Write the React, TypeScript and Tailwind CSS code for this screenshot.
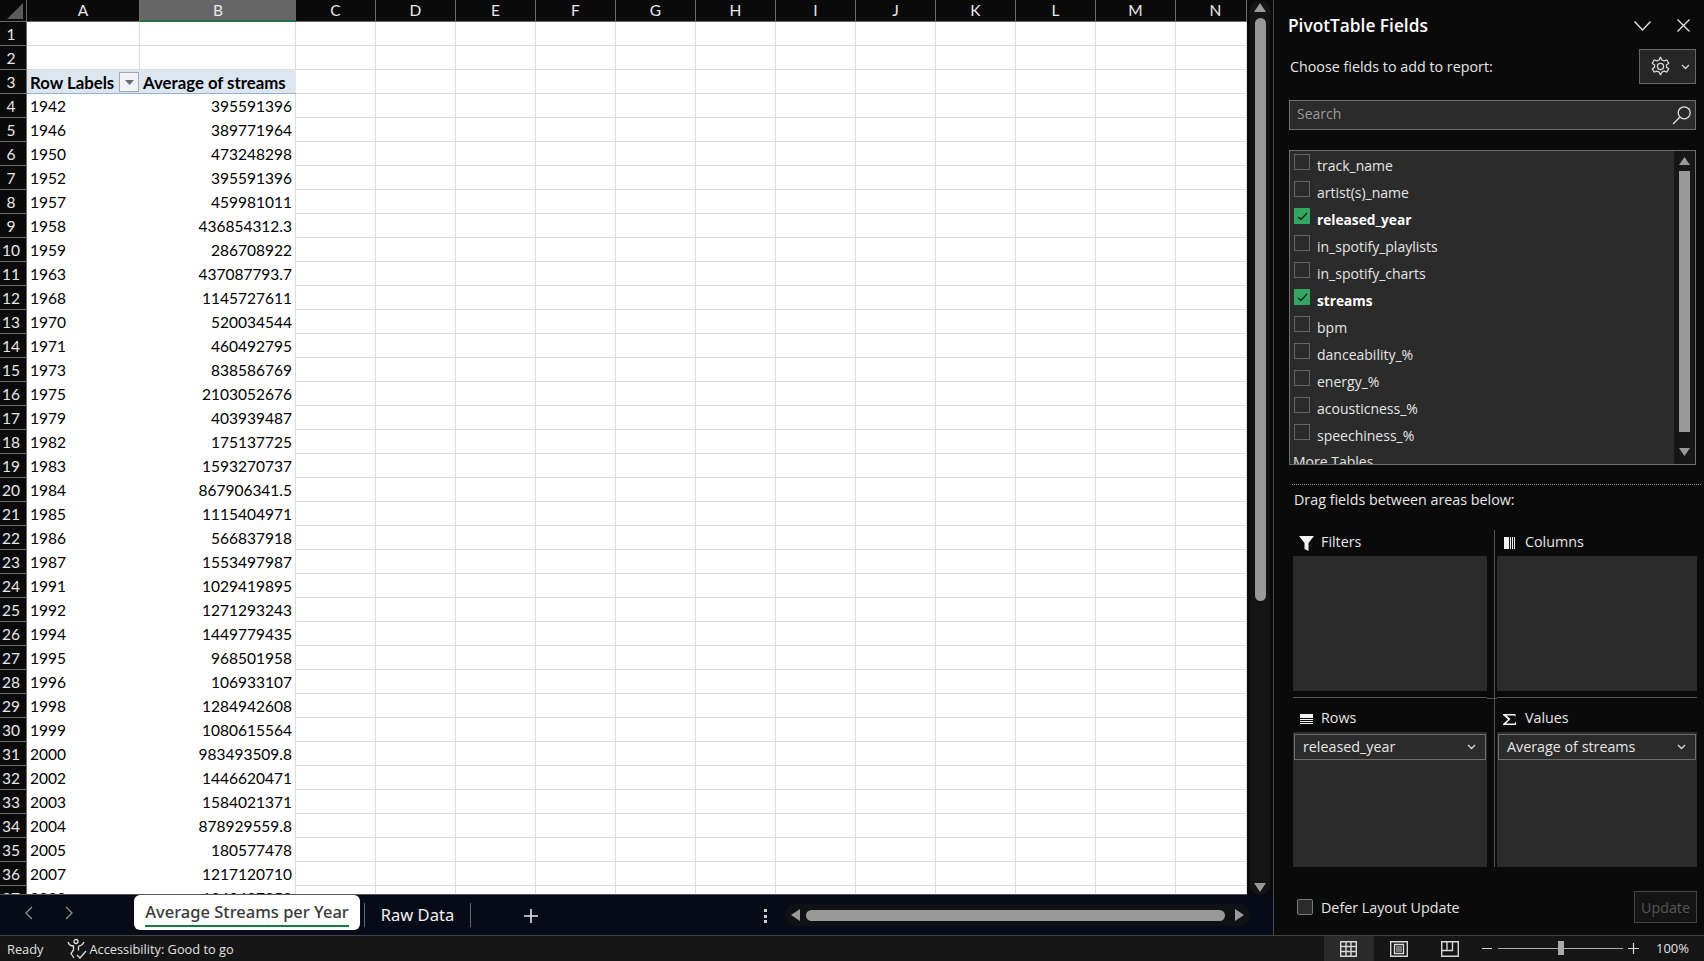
import * as React from "react";

const columns = [
  { name: "A", w: "w-[113px]" },
  { name: "B", w: "w-[156px]" },
  { name: "C", w: "w-[80px]" },
  { name: "D", w: "w-[80px]" },
  { name: "E", w: "w-[80px]" },
  { name: "F", w: "w-[80px]" },
  { name: "G", w: "w-[80px]" },
  { name: "H", w: "w-[80px]" },
  { name: "I", w: "w-[80px]" },
  { name: "J", w: "w-[80px]" },
  { name: "K", w: "w-[80px]" },
  { name: "L", w: "w-[80px]" },
  { name: "M", w: "w-[80px]" },
  { name: "N", w: "w-[71px] pl-[9px]" },
];

const data: [string, string][] = [
  ["1942", "395591396"],
  ["1946", "389771964"],
  ["1950", "473248298"],
  ["1952", "395591396"],
  ["1957", "459981011"],
  ["1958", "436854312.3"],
  ["1959", "286708922"],
  ["1963", "437087793.7"],
  ["1968", "1145727611"],
  ["1970", "520034544"],
  ["1971", "460492795"],
  ["1973", "838586769"],
  ["1975", "2103052676"],
  ["1979", "403939487"],
  ["1982", "175137725"],
  ["1983", "1593270737"],
  ["1984", "867906341.5"],
  ["1985", "1115404971"],
  ["1986", "566837918"],
  ["1987", "1553497987"],
  ["1991", "1029419895"],
  ["1992", "1271293243"],
  ["1994", "1449779435"],
  ["1995", "968501958"],
  ["1996", "106933107"],
  ["1998", "1284942608"],
  ["1999", "1080615564"],
  ["2000", "983493509.8"],
  ["2002", "1446620471"],
  ["2003", "1584021371"],
  ["2004", "878929559.8"],
  ["2005", "180577478"],
  ["2007", "1217120710"],
  ["2008", "1240487858"],
];

const fields = [
  { name: "track_name" },
  { name: "artist(s)_name" },
  { name: "released_year", on: true },
  { name: "in_spotify_playlists" },
  { name: "in_spotify_charts" },
  { name: "streams", on: true },
  { name: "bpm" },
  { name: "danceability_%" },
  { name: "energy_%" },
  { name: "acousticness_%" },
  { name: "speechiness_%" },
];

function RowHead({ n }: { n: number }) {
  return (
    <div className="w-[27px] shrink-0 h-full bg-[#0a0a0a] border-b border-r border-[#6b6b6b] text-[#e8e8e8] text-[15.5px] leading-[24px] text-center pr-[4px]">
      {n}
    </div>
  );
}

function EmptyCols() {
  return (
    <>
      {columns.slice(2).map((c) => (
        <div key={c.name} className={`${c.w} shrink-0 h-full border-r border-b border-[#dcdcdc]`} />
      ))}
    </>
  );
}

function Sheet() {
  return (
    <div className="h-[895px] w-[1247px] overflow-hidden bg-white font-['Lato',sans-serif] border-b border-[#555]">
      {/* column headers */}
      <div className="flex h-[22px] bg-[#0a0a0a] text-[#e8e8e8] text-[15.5px]">
        <div className="w-[27px] shrink-0 relative border-r border-[#6b6b6b] border-b">
          <svg width="16" height="16" viewBox="0 0 16 16" className="absolute right-[3px] bottom-[2px]">
            <path d="M16 0V16H0Z" fill="#5a5a5a" />
          </svg>
        </div>
        {columns.map((c) =>
          c.name === "B" ? (
            <div key={c.name} className={`${c.w} shrink-0 text-center leading-[20px] bg-[#666] border-b-2 border-[#217346]`}>
              {c.name}
            </div>
          ) : (
            <div key={c.name} className={`${c.w} shrink-0 text-center leading-[20px] border-r border-b border-[#6b6b6b]`}>
              {c.name}
            </div>
          )
        )}
      </div>

      {[1, 2].map((n) => (
        <div key={n} className="flex h-[24px]">
          <RowHead n={n} />
          <div className="w-[113px] shrink-0 border-r border-b border-[#dcdcdc]" />
          <div className="w-[156px] shrink-0 border-r border-b border-[#dcdcdc]" />
          <EmptyCols />
        </div>
      ))}

      {/* pivot header */}
      <div className="flex h-[24px] text-black">
        <RowHead n={3} />
        <div className="w-[113px] shrink-0 bg-[#dce6f1] border-b border-[#95b3d7] font-bold text-[16.8px] pl-[3px] leading-[25px] relative whitespace-nowrap">
          Row Labels
          <div className="absolute right-[1px] top-[2px] w-[20px] h-[20px] bg-[#f0f3f8] border border-[#a8a8a8] flex items-center justify-center">
            <svg width="9" height="5" viewBox="0 0 9 5">
              <path d="M0 0H9L4.5 5Z" fill="#6e6e6e" />
            </svg>
          </div>
        </div>
        <div className="w-[156px] shrink-0 bg-[#dce6f1] border-b border-[#95b3d7] font-bold text-[16.8px] pl-[3px] leading-[25px] whitespace-nowrap">
          Average of streams
        </div>
        <EmptyCols />
      </div>

      {data.map(([year, val], i) => (
        <div key={year} className="flex h-[24px] text-black text-[15.5px]">
          <RowHead n={i + 4} />
          <div className="w-[113px] shrink-0 pl-[3px] leading-[25px]">{year}</div>
          <div className="w-[156px] shrink-0 pr-[3px] text-right leading-[25px] border-r border-[#dcdcdc]">{val}</div>
          <EmptyCols />
        </div>
      ))}
    </div>
  );
}

function VScroll() {
  return (
    <div className="w-[26px] h-[895px] bg-[#0a0a0a] flex justify-center">
      <div className="w-[20px] h-[895px] rounded-full bg-[#141414] flex flex-col items-center pt-[3px] pb-[3px]">
        <svg width="12" height="9" viewBox="0 0 12 9" className="shrink-0">
          <path d="M6 0L12 9H0Z" fill="#999" />
        </svg>
        <div className="w-[11px] h-[583px] mt-[6px] rounded-full bg-[#999] shrink-0" />
        <div className="flex-1" />
        <svg width="12" height="9" viewBox="0 0 12 9" className="shrink-0">
          <path d="M0 0H12L6 9Z" fill="#999" />
        </svg>
      </div>
    </div>
  );
}

function SheetTabs() {
  return (
    <div className="h-[40px] bg-[#070b17] flex items-start text-[#f2f2f2] font-['Noto_Sans',sans-serif]">
      <div className="w-[134px] shrink-0 h-[36px] flex items-center text-[#8f8f8f]">
        <svg width="12" height="16" viewBox="0 0 12 16" className="ml-[23px]">
          <path d="M9 2L3 8L9 14" fill="none" stroke="currentColor" strokeWidth="1.3" />
        </svg>
        <svg width="12" height="16" viewBox="0 0 12 16" className="ml-[28px]">
          <path d="M3 2L9 8L3 14" fill="none" stroke="currentColor" strokeWidth="1.3" />
        </svg>
      </div>
      <div className="w-[226px] shrink-0 h-[35px] bg-white rounded-[6px] px-[11px] pt-[3px]">
        <div className="text-[#3a3a3a] text-[16.5px] leading-[28px] h-[29px] border-b-2 border-[#107c41] text-center whitespace-nowrap font-medium">
          Average Streams per Year
        </div>
      </div>
      <div className="w-px h-[24px] bg-[#666] ml-[4px] mt-[8px] shrink-0" />
      <div className="w-[105px] shrink-0 text-center text-[16.5px] leading-[40px]">Raw Data</div>
      <div className="w-px h-[24px] bg-[#666] mt-[8px] shrink-0" />
      <svg width="16" height="16" viewBox="0 0 16 16" className="ml-[52px] mt-[13px] shrink-0">
        <path d="M8 1V15M1 8H15" stroke="#e6e6e6" strokeWidth="1.6" />
      </svg>
      <div className="ml-[225px] mt-[14px] flex flex-col gap-[2.5px] shrink-0">
        <span className="w-[3px] h-[3px] bg-[#d0d0d0]" />
        <span className="w-[3px] h-[3px] bg-[#d0d0d0]" />
        <span className="w-[3px] h-[3px] bg-[#d0d0d0]" />
      </div>
      <div className="ml-[18px] mt-[9px] w-[465px] h-[22px] rounded-full bg-[#101114] flex items-center px-[6px] shrink-0">
        <svg width="9" height="12" viewBox="0 0 9 12">
          <path d="M9 0V12L0 6Z" fill="#999" />
        </svg>
        <div className="ml-[6px] w-[419px] h-[11px] rounded-full bg-[#999]" />
        <div className="flex-1" />
        <svg width="9" height="12" viewBox="0 0 9 12">
          <path d="M0 0V12L9 6Z" fill="#999" />
        </svg>
      </div>
    </div>
  );
}

function Checkbox({ on }: { on?: boolean }) {
  return on ? (
    <div className="w-[16px] h-[16px] bg-[#33a661] flex items-center justify-center shrink-0">
      <svg width="11" height="9" viewBox="0 0 11 9">
        <path d="M1 5L4 7.5L10 1" fill="none" stroke="#0c1a10" strokeWidth="1.2" />
      </svg>
    </div>
  ) : (
    <div className="w-[16px] h-[16px] border border-[#666] shrink-0" />
  );
}

function Chevron({ color = "#d8d8d8" }: { color?: string }) {
  return (
    <svg width="9" height="6" viewBox="0 0 9 6">
      <path d="M1 1L4.5 4.5L8 1" fill="none" stroke={color} strokeWidth="1.3" />
    </svg>
  );
}

function FieldList() {
  return (
    <div className="mt-[20px] ml-[15px] w-[407px] h-[315px] bg-[#2b2b2b] border border-[#6e6e6e] flex overflow-hidden text-[14px]">
      <div className="flex-1 overflow-hidden pl-[4px]">
        {fields.map((f) => (
          <div key={f.name} className="h-[27px] flex items-start pt-[3px]">
            <Checkbox on={f.on} />
            <span className={`ml-[7px] mt-[2px] leading-[20px] ${f.on ? "font-bold text-white text-[13.7px]" : "text-[#e6e6e6]"}`}>
              {f.name}
            </span>
          </div>
        ))}
        <div className="text-[#e6e6e6] leading-[20px] -ml-[1px] mt-[4px]">More Tables...</div>
      </div>
      <div className="w-[21px] shrink-0 bg-[#171717] flex flex-col items-center pt-[6px] pb-[8px]">
        <svg width="11" height="8" viewBox="0 0 11 8" className="shrink-0">
          <path d="M5.5 0L11 8H0Z" fill="#999" />
        </svg>
        <div className="w-[11px] h-[261px] mt-[6px] bg-[#999] shrink-0" />
        <div className="flex-1" />
        <svg width="11" height="8" viewBox="0 0 11 8" className="shrink-0">
          <path d="M0 0H11L5.5 8Z" fill="#999" />
        </svg>
      </div>
    </div>
  );
}

function AreaHead({ icon, label, right }: { icon: React.ReactNode; label: string; right?: boolean }) {
  return (
    <div className="h-[26px] flex items-center text-[#e6e6e6]">
      <div className={`w-[16px] h-[16px] ${right ? "ml-[4px] mr-[8px]" : "ml-[5px] mr-[7px]"} flex items-center justify-center shrink-0`}>{icon}</div>
      <span className="leading-[20px] pb-[2px]">{label}</span>
    </div>
  );
}

function DropPill({ label }: { label: string }) {
  return (
    <div className="mx-[1px] mt-[2px] h-[26px] border border-[#6e6e6e] flex items-center justify-between pl-[8px] pr-[9px] text-[#e6e6e6]">
      <span className="leading-[20px]">{label}</span>
      <Chevron />
    </div>
  );
}

function PivotPanel() {
  return (
    <div className="w-[431px] h-[935px] bg-[#0a0a0a] border-l border-[#444b55] shrink-0 font-['Open_Sans',sans-serif] text-[14.3px] text-[#e6e6e6]">
      {/* title */}
      <div className="h-[49px] flex items-center pl-[14px] pr-[14px] pt-[2px]">
        <span className="text-[17.3px] font-semibold text-white leading-[24px] mt-[1px]">PivotTable Fields</span>
        <div className="flex-1" />
        <svg width="17" height="10" viewBox="0 0 17 10">
          <path d="M.5 .5L8.5 9L16.5 .5" fill="none" stroke="#e6e6e6" strokeWidth="1.3" />
        </svg>
        <svg width="13" height="13" viewBox="0 0 13 13" className="ml-[26px]">
          <path d="M.5 .5L12.5 12.5M12.5 .5L.5 12.5" stroke="#e6e6e6" strokeWidth="1.3" />
        </svg>
      </div>

      {/* choose fields + gear */}
      <div className="h-[35px] flex items-center pl-[16px] pr-[8px]">
        <span className="leading-[20px]">Choose fields to add to report:</span>
        <div className="flex-1" />
        <div className="w-[57px] h-[35px] border border-[#666] bg-[#262626] flex items-center justify-center gap-[9px] pl-[4px]">
          <svg width="23" height="23" viewBox="0 0 24 24" fill="none" stroke="#d8d8d8" strokeWidth="1.3">
            <path d="M12.2 2.5l1.3 2.7 2.3 1 2.8-1 2 3.4-2.4 1.8v2.2l2.4 1.8-2 3.4-2.8-1-2.3 1-1.3 2.7h-.4l-1.3-2.7-2.3-1-2.8 1-2-3.4 2.4-1.8v-2.2L3.4 8.6l2-3.4 2.8 1 2.3-1 1.3-2.7z" />
            <circle cx="12" cy="12" r="3.2" />
          </svg>
          <Chevron />
        </div>
      </div>

      {/* search */}
      <div className="mt-[16px] ml-[15px] w-[407px] h-[30px] bg-[#2b2b2b] border border-[#6e6e6e] flex items-center pl-[7px] pr-[3px]">
        <span className="text-[#9a9a9a] text-[14px] leading-[20px] pb-[2px]">Search</span>
        <div className="flex-1" />
        <svg width="20" height="20" viewBox="0 0 20 20" fill="none" stroke="#e0e0e0" strokeWidth="1.3">
          <circle cx="12.2" cy="7.8" r="6" />
          <path d="M7.8 12.2L1 19" />
        </svg>
      </div>

      <FieldList />

      <div className="mt-[19px] ml-[18px] mr-[3px] border-t border-dotted border-[#9a9a9a]" />
      <div className="ml-[20px] mt-[5px] h-[20px] leading-[20px]">Drag fields between areas below:</div>

      {/* areas */}
      <div className="ml-[19px] mt-[20px] w-[404px] grid grid-cols-[194px_10px_200px] h-[337px] grid-rows-[168px_169px]">
        <div className="border-b border-[#555]">
          <AreaHead
            label="Filters"
            icon={
              <svg width="15" height="15" viewBox="0 0 15 15">
                <path d="M0 0H15L9.5 7V15L5.5 13V7Z" fill="#f2f2f2" />
              </svg>
            }
          />
          <div className="h-[135px] bg-[#2b2b2b]" />
        </div>
        <div className="row-span-2 relative">
          <div className="ml-[7px] w-px h-[337px] bg-[#555]" />
          <div className="absolute left-0 right-0 top-[168px] h-px bg-[#555]" />
        </div>
        <div className="border-b border-[#555]">
          <AreaHead
            right
            label="Columns"
            icon={
              <svg width="11" height="12" viewBox="0 0 11 12">
                <path d="M0 0H5V12H0ZM6 0H7V12H6ZM8 0H9V12H8ZM10 0H11V12H10Z" fill="#f2f2f2" />
              </svg>
            }
          />
          <div className="h-[135px] bg-[#2b2b2b]" />
        </div>
        <div className="pt-[8px]">
          <AreaHead
            label="Rows"
            icon={
              <svg width="13" height="11" viewBox="0 0 13 11">
                <path d="M0 0H13V4H0ZM0 5H13V6H0ZM0 7H13V8H0ZM0 9H13V10H0Z" fill="#f2f2f2" />
              </svg>
            }
          />
          <div className="h-[135px] bg-[#2b2b2b] overflow-hidden">
            <DropPill label="released_year" />
          </div>
        </div>
        <div className="pt-[8px]">
          <AreaHead
            right
            label="Values"
            icon={
              <svg width="13" height="11" viewBox="0 0 13 11">
                <path d="M0 0H12.5V3L11.5 1.5H3.5L7.5 5L3 9.5H11.5L13 7.5V11H0V10L5 5.5L0 1Z" fill="#f2f2f2" />
              </svg>
            }
          />
          <div className="h-[135px] bg-[#2b2b2b] overflow-hidden">
            <DropPill label="Average of streams" />
          </div>
        </div>
      </div>

      {/* defer update */}
      <div className="mt-[24px] ml-[23px] w-[400px] flex items-center h-[32px]">
        <div className="w-[16px] h-[16px] rounded-[2px] border border-[#777] bg-[#2b2b2b]" />
        <span className="ml-[8px] mt-[1px] leading-[20px]">Defer Layout Update</span>
        <div className="flex-1" />
        <div className="w-[63px] h-[32px] border border-[#444] bg-[#141414] text-[#555] flex items-center justify-center pt-[1px]">
          Update
        </div>
      </div>
    </div>
  );
}

function StatusBar() {
  return (
    <div className="h-[26px] bg-[#161616] border-t border-[#444] flex items-center text-[#e0e0e0] font-['Open_Sans',sans-serif] text-[12.8px]">
      <span className="ml-[7px] mt-[3px]">Ready</span>
      <svg width="22" height="22" viewBox="0 0 22 22" fill="none" stroke="#e0e0e0" strokeWidth="1.3" className="ml-[23px] mt-[1px]">
        <circle cx="10" cy="3.5" r="2" />
        <path d="M2 4C3 7 6 8 7.5 8V12L5 15.5L8 20M12.5 8C14 8 16.5 7 18 4M12.5 8V12.5" />
        <path d="M11 17L14 20L20 13" />
      </svg>
      <span className="ml-[1px] mt-[3px]">Accessibility: Good to go</span>
      <div className="flex-1" />
      <div className="w-[50px] h-[25px] bg-[#2a2a2a] flex items-center justify-center">
        <svg width="17" height="16" viewBox="0 0 17 16" fill="none" stroke="#d8d8d8" strokeWidth="1.4">
          <path d="M.7.7H16.3V15.3H.7ZM.7 5.5H16.3M.7 10.5H16.3M6 .7V15.3M11 .7V15.3" />
        </svg>
      </div>
      <div className="w-[51px] flex justify-center">
        <svg width="18" height="16" viewBox="0 0 18 16" fill="none" stroke="#d8d8d8" strokeWidth="1.4">
          <path d="M.7.7H17.3V15.3H.7ZM4.5 3.5H13.5V12.5H4.5Z" />
          <path d="M6 6H12M6 8H12M6 10H12" strokeWidth="1" />
        </svg>
      </div>
      <div className="w-[50px] flex justify-center">
        <svg width="18" height="16" viewBox="0 0 18 16" fill="none" stroke="#d8d8d8" strokeWidth="1.4">
          <path d="M.7.7H17.3V15.3H.7ZM.7 9.5H11.5V.7M6 .7V9.5" />
        </svg>
      </div>
      <div className="w-[10px] h-[1.5px] bg-[#d8d8d8] ml-[7px]" />
      <div className="ml-[6px] w-[125px] h-px bg-[#aaa] relative">
        <div className="absolute left-[60px] -top-[7px] w-[6px] h-[14px] bg-[#aaa]" />
      </div>
      <svg width="11" height="11" viewBox="0 0 11 11" className="ml-[5px]">
        <path d="M5.5 0V11M0 5.5H11" stroke="#d8d8d8" strokeWidth="1.2" />
      </svg>
      <span className="ml-[17px] mr-[15px] text-[13px]">100%</span>
    </div>
  );
}

export default function App() {
  return (
    <div className="w-[1704px] h-[961px] overflow-hidden bg-[#0a0a0a] flex flex-col">
      <div className="flex h-[935px]">
        <div className="w-[1273px] shrink-0 flex flex-col">
          <div className="flex">
            <Sheet />
            <VScroll />
          </div>
          <SheetTabs />
        </div>
        <PivotPanel />
      </div>
      <StatusBar />
    </div>
  );
}
